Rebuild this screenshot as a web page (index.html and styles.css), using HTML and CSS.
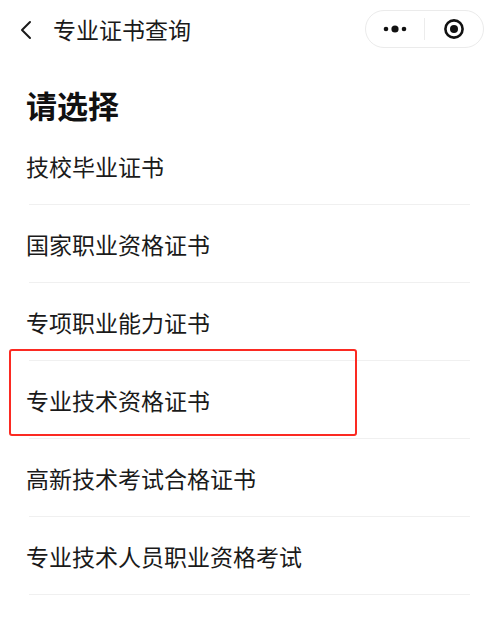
FILE: index.html
```html
<!DOCTYPE html>
<html lang="zh-CN">
<head>
    <meta charset="UTF-8">
    <meta name="viewport" content="width=device-width, initial-scale=1.0">
    <title>专业证书查询</title>
    <link rel="stylesheet" href="styles.css">
</head>
<body>

    <div class="nav-bar">
        <svg class="back-icon" width="14" height="20" viewBox="0 0 14 20">
            <path d="M11 2 L3 10 L11 18" fill="none" stroke="#1a1a1a" stroke-width="2" stroke-linecap="round" stroke-linejoin="round"/>
        </svg>
        <div class="nav-title">专业证书查询</div>
        <div class="capsule">
            <div class="capsule-btn">
                <svg width="26" height="8" viewBox="0 0 26 8">
                    <circle cx="4" cy="4" r="2.3" fill="#111"/>
                    <circle cx="13" cy="4" r="3.6" fill="#111"/>
                    <circle cx="22" cy="4" r="2.3" fill="#111"/>
                </svg>
            </div>
            <div class="capsule-sep"></div>
            <div class="capsule-btn">
                <svg width="22" height="22" viewBox="0 0 22 22">
                    <circle cx="11" cy="11" r="8.6" fill="none" stroke="#111" stroke-width="2.6"/>
                    <circle cx="11" cy="11" r="4" fill="#111"/>
                </svg>
            </div>
        </div>
    </div>

    <h1 class="page-heading">请选择</h1>

    <ul class="cert-list">
        <li class="cert-item">技校毕业证书</li>
        <li class="cert-item">国家职业资格证书</li>
        <li class="cert-item">专项职业能力证书</li>
        <li class="cert-item highlighted">专业技术资格证书</li>
        <li class="cert-item">高新技术考试合格证书</li>
        <li class="cert-item">专业技术人员职业资格考试</li>
    </ul>

</body>
</html>
```

FILE: styles.css
```css
body {
    margin: 0;
    padding: 0;
    background-color: #fff;
    color: #1a1a1a;
    font-family: "Noto Sans CJK SC", "Noto Sans", sans-serif;
}

.nav-bar {
    height: 58px;
    display: flex;
    align-items: center;
    padding: 0 12px 0 19px;
}

.back-icon {
    display: block;
    margin-top: 1px;
}

.nav-title {
    font-size: 23px;
    margin-left: 20px;
    flex: 1;
    line-height: 30px;
}

.capsule {
    width: 119px;
    height: 38px;
    border: 1px solid #ebebeb;
    border-radius: 20px;
    display: flex;
    align-items: center;
    box-sizing: border-box;
}

.capsule-btn {
    flex: 1;
    display: flex;
    justify-content: center;
    align-items: center;
}

.capsule-btn svg {
    display: block;
}

.capsule-sep {
    width: 1px;
    height: 22px;
    background-color: #ececec;
}

.page-heading {
    font-size: 31px;
    font-weight: bold;
    line-height: 40px;
    margin: 27px 0 2px 26px;
    color: #111;
}

.cert-list {
    list-style: none;
    margin: 0 26px 0 29px;
    padding: 0;
}

.cert-item {
    position: relative;
    height: 77px;
    line-height: 78px;
    font-size: 23px;
    text-indent: -3px;
    border-bottom: 1px solid #f0f0f0;
}

.cert-item.highlighted::after {
    content: "";
    position: absolute;
    left: -20px;
    top: -12px;
    width: 348px;
    height: 87px;
    border: 2px solid #fb2a22;
    border-radius: 3px;
    box-sizing: border-box;
}
```
